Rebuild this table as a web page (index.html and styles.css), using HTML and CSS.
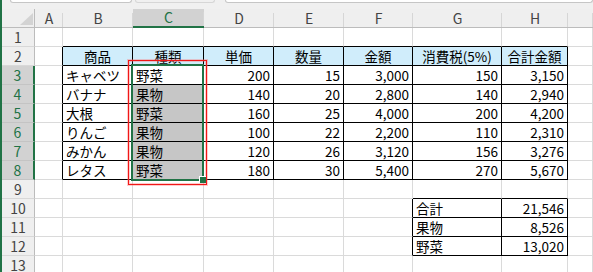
FILE: index.html
```html
<!DOCTYPE html>
<html lang="ja">
<head>
<meta charset="utf-8">
<title>Book1 - Excel</title>
<link rel="stylesheet" href="styles.css">
</head>
<body>
<div class="app">
  <div class="bar">
    <div class="box name"></div>
    <div class="box mid"></div>
    <div class="box fx"></div>
  </div>
  <div class="sheet">
    <div class="cells">
      <!-- column headers -->
      <div class="corner"><span class="tri"></span></div>
      <div class="c hd">A</div><div class="c hd">B</div><div class="c hd on">C</div><div class="c hd">D</div><div class="c hd">E</div><div class="c hd">F</div><div class="c hd">G</div><div class="c hd">H</div><div class="c hd"></div>

      <!-- 1 -->
      <div class="c rh">1</div><div class="c"></div><div class="c kb"></div><div class="c kb"></div><div class="c kb"></div><div class="c kb"></div><div class="c kb"></div><div class="c kb"></div><div class="c kb"></div><div class="c"></div>

      <!-- 2 -->
      <div class="c rh">2</div><div class="c kr"></div><div class="c k th">商品</div><div class="c k th">種類</div><div class="c k th">単価</div><div class="c k th">数量</div><div class="c k th">金額</div><div class="c k th">消費税(5%)</div><div class="c k th">合計金額</div><div class="c"></div>

      <!-- 3 -->
      <div class="c rh on">3</div><div class="c kr"></div><div class="c k">キャベツ</div><div class="c k">野菜</div><div class="c k n">200</div><div class="c k n">15</div><div class="c k n">3,000</div><div class="c k n">150</div><div class="c k n">3,150</div><div class="c"></div>

      <!-- 4 -->
      <div class="c rh on">4</div><div class="c kr"></div><div class="c k">バナナ</div><div class="c k sel">果物</div><div class="c k n">140</div><div class="c k n">20</div><div class="c k n">2,800</div><div class="c k n">140</div><div class="c k n">2,940</div><div class="c"></div>

      <!-- 5 -->
      <div class="c rh on">5</div><div class="c kr"></div><div class="c k">大根</div><div class="c k sel">野菜</div><div class="c k n">160</div><div class="c k n">25</div><div class="c k n">4,000</div><div class="c k n">200</div><div class="c k n">4,200</div><div class="c"></div>

      <!-- 6 -->
      <div class="c rh on">6</div><div class="c kr"></div><div class="c k">りんご</div><div class="c k sel">果物</div><div class="c k n">100</div><div class="c k n">22</div><div class="c k n">2,200</div><div class="c k n">110</div><div class="c k n">2,310</div><div class="c"></div>

      <!-- 7 -->
      <div class="c rh on">7</div><div class="c kr"></div><div class="c k">みかん</div><div class="c k sel">果物</div><div class="c k n">120</div><div class="c k n">26</div><div class="c k n">3,120</div><div class="c k n">156</div><div class="c k n">3,276</div><div class="c"></div>

      <!-- 8 -->
      <div class="c rh on">8</div><div class="c kr"></div><div class="c k">レタス</div><div class="c k sel">野菜</div><div class="c k n">180</div><div class="c k n">30</div><div class="c k n">5,400</div><div class="c k n">270</div><div class="c k n">5,670</div><div class="c"></div>

      <!-- 9 -->
      <div class="c rh">9</div><div class="c"></div><div class="c"></div><div class="c"></div><div class="c"></div><div class="c"></div><div class="c"></div><div class="c kb"></div><div class="c kb"></div><div class="c"></div>

      <!-- 10 -->
      <div class="c rh">10</div><div class="c"></div><div class="c"></div><div class="c"></div><div class="c"></div><div class="c"></div><div class="c kr"></div><div class="c k">合計</div><div class="c k n">21,546</div><div class="c"></div>

      <!-- 11 -->
      <div class="c rh">11</div><div class="c"></div><div class="c"></div><div class="c"></div><div class="c"></div><div class="c"></div><div class="c kr"></div><div class="c k">果物</div><div class="c k n">8,526</div><div class="c"></div>

      <!-- 12 -->
      <div class="c rh">12</div><div class="c"></div><div class="c"></div><div class="c"></div><div class="c"></div><div class="c"></div><div class="c kr"></div><div class="c k">野菜</div><div class="c k n">13,020</div><div class="c"></div>

      <!-- 13 -->
      <div class="c rh">13</div><div class="c"></div><div class="c"></div><div class="c"></div><div class="c"></div><div class="c"></div><div class="c"></div><div class="c"></div><div class="c"></div><div class="c"></div>
    </div>

    <!-- selection frame and the red callout, laid on the same column/row tracks -->
    <div class="marks">
      <div class="callout"></div>
      <div class="range"><span class="handle"></span></div>
    </div>
  </div>
</div>
</body>
</html>
```

FILE: styles.css
```css
html, body {
  margin: 0;
  padding: 0;
  background: #fff;
  overflow: hidden;
}

.app {
  width: 591px;
  height: 272px;
  overflow: hidden;
  border-left: 2px solid #217346;
  font-family: "Noto Sans CJK JP", "Noto Sans", sans-serif;
  font-size: 13.5px;
  color: #000;
}

/* bottom edge of the name box / formula bar */
.bar {
  height: 9px;
  background: #f0f0f0;
  display: flex;
  align-items: flex-start;
  overflow: hidden;
}

.box {
  height: 2px;
  background: #fff;
  border: 1px solid #c6c6c6;
  border-top: 0;
  border-radius: 0 0 3px 3px;
}

.box.name { margin-left: 8px; width: 120px; }
.box.mid { margin-left: 3px; width: 78px; background: #f0f0f0; border-color: #d6d6d6; }
.box.fx { margin-left: 10px; flex: 1; }

/* grid */
.sheet {
  display: grid;
}

.sheet > * {
  grid-area: 1 / 1;
}

.cells,
.marks {
  display: grid;
  grid-template-columns: 33px 28px 70px 71px 70px 70px 69px 89px 66px 1fr;
  grid-template-rows: repeat(14, 19px);
}

.marks {
  pointer-events: none;
}

.c {
  box-sizing: border-box;
  border-right: 1px solid #dadada;
  border-bottom: 1px solid #dadada;
  padding: 0 3px 0 3px;
  line-height: 18px;
  white-space: nowrap;
  overflow: hidden;
}

/* headers */
.corner {
  box-sizing: border-box;
  background: #efefef;
  border-right: 1px solid #bcbcbc;
  border-bottom: 1px solid #bcbcbc;
  display: flex;
  justify-content: flex-end;
  align-items: flex-end;
  padding: 0 1px 2px 0;
}

.tri {
  width: 13px;
  height: 12px;
  background: #d3d3d3;
  clip-path: polygon(100% 0, 100% 100%, 0 100%);
}

.hd {
  border-right: 0;
  border-bottom-color: #bcbcbc;
  background: linear-gradient(#d6d6d6, #d6d6d6) right bottom / 1px 14px no-repeat;
  background-color: #efefef;
  color: #444;
  font-size: 14px;
  text-align: center;
  padding: 0;
  overflow: visible;
}

.hd.on {
  background-color: #d2d2d2;
  color: #217346;
  border-bottom: 2px solid #217346;
  line-height: 17px;
}

.rh {
  background: #efefef;
  border-right-color: #bcbcbc;
  border-bottom-color: #d8d8d8;
  color: #444;
  font-size: 14px;
  text-align: center;
  padding: 0;
}

.rh.on {
  background: #d2d2d2;
  color: #217346;
  border-right: 2px solid #217346;
  border-bottom-color: #c4c4c4;
}

/* ruled table */
.k {
  border-right-color: #000;
  border-bottom-color: #000;
}

.kr {
  border-right-color: #000;
}

.kb {
  border-bottom-color: #000;
}

.th {
  background: #d0edfb;
  text-align: center;
}

.n {
  text-align: right;
}

.sel {
  background: #c6c6c6;
}

/* selection frame on C3:C8 */
.range {
  grid-column: 4;
  grid-row: 4 / 10;
  margin: -2px 0 -1px -2px;
  border: 2px solid #217346;
  position: relative;
}

.handle {
  position: absolute;
  right: -4px;
  bottom: -4px;
  width: 6px;
  height: 6px;
  background: #217346;
  border-left: 1px solid #fff;
  border-top: 1px solid #fff;
}

/* red callout around the same range */
.callout {
  grid-column: 4;
  grid-row: 4 / 10;
  margin: -6px -3px -5px -5px;
  border: 1px solid #f01818;
  box-shadow: 0 0 0 1px rgba(255, 110, 110, 0.35), inset 0 0 0 1px rgba(255, 110, 110, 0.35);
}
```
